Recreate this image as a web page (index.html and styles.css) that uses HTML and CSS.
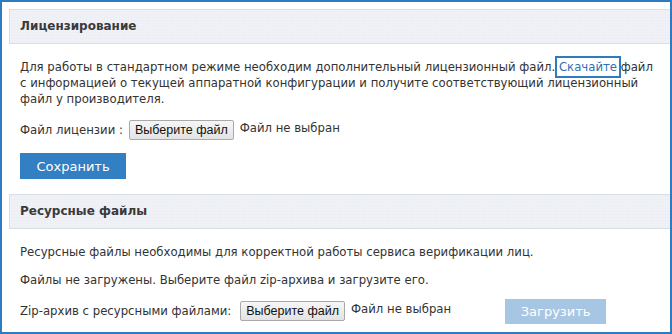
FILE: index.html
```html
<!DOCTYPE html>
<html>
<head>
    <title>Лицензирование</title>
    <link rel="stylesheet" href="styles.css">
</head>
<body>
    <div class="frame">
        <div class="section-head">Лицензирование</div>
        <div class="section-body">
            <p class="text">Для работы в стандартном режиме необходим дополнительный лицензионный файл. <a href="#" class="link">Скачайте</a> файл с информацией о текущей аппаратной конфигурации и получите соответствующий лицензионный файл у производителя.</p>
            <div class="file-row">
                <span class="label">Файл лицензии :</span>
                <span class="file-btn">Выберите файл</span>
                <span class="file-name">Файл не выбран</span>
            </div>
            <button class="btn">Сохранить</button>
        </div>

        <div class="section-head">Ресурсные файлы</div>
        <div class="section-body">
            <p class="text">Ресурсные файлы необходимы для корректной работы сервиса верификации лиц.</p>
            <p class="text gap">Файлы не загружены. Выберите файл zip-архива и загрузите его.</p>
            <div class="file-row upload-row">
                <span class="label">Zip-архив с ресурсными файлами:</span>
                <span class="file-btn">Выберите файл</span>
                <span class="file-name">Файл не выбран</span>
                <button class="btn btn-disabled">Загрузить</button>
            </div>
        </div>
    </div>
</body>
</html>
```

FILE: styles.css
```css
html, body {
    margin: 0;
    padding: 0;
    background: white;
}
.frame {
    box-sizing: border-box;
    width: 672px;
    height: 334px;
    border: 2px solid #2f7bbf;
    padding: 7px 0 0 7px;
    font-family: "DejaVu Sans", Verdana, sans-serif;
    font-size: 11.7px;
    color: #333;
}
.section-head {
    box-sizing: border-box;
    height: 35px;
    line-height: 33px;
    padding-left: 10px;
    border: 1px solid #d6dee6;
    border-right: none;
    background-color: #eef2f7;
    background-image: radial-gradient(#f3e4ef 0.7px, transparent 0.8px);
    background-size: 3px 3px;
    font-size: 12px;
    font-weight: bold;
    color: #3a3a3a;
}
.section-body {
    padding: 0 8px 0 11px;
}
.text {
    margin: 15px 0 0 0;
    line-height: 16px;
}
.text.gap {
    margin-top: 12px;
}
.link {
    color: #2f6fb5;
    text-decoration: none;
    outline: 2px solid #2f7bbf;
    outline-offset: 2px;
}
.file-row {
    display: flex;
    align-items: center;
    margin-top: 12px;
    height: 22px;
}
.label {
    margin-right: 6px;
}
.upload-row .label {
    margin-right: 9px;
}
.file-btn {
    box-sizing: border-box;
    height: 20px;
    line-height: 18px;
    padding: 0 5px;
    border: 1px solid #a9a9a9;
    border-radius: 2px;
    background: linear-gradient(#f6f6f6, #e3e3e3);
    font-family: "Liberation Sans", Arial, sans-serif;
    font-size: 12.5px;
    color: #111;
}
.file-name {
    margin-left: 6px;
    margin-bottom: 4px;
}
.btn {
    display: block;
    margin-top: 12px;
    width: 106px;
    height: 26px;
    border: none;
    background: #337fc3;
    color: white;
    font-family: "DejaVu Sans", Verdana, sans-serif;
    font-size: 13px;
    cursor: pointer;
    padding: 0;
}
.btn-disabled {
    margin: 0 0 0 54px;
    width: 101px;
    height: 25px;
    background: #a7c6e3;
    cursor: default;
}
.section-body + .section-head {
    margin-top: 15px;
}
.upload-row {
    margin-top: 12px;
}
```
